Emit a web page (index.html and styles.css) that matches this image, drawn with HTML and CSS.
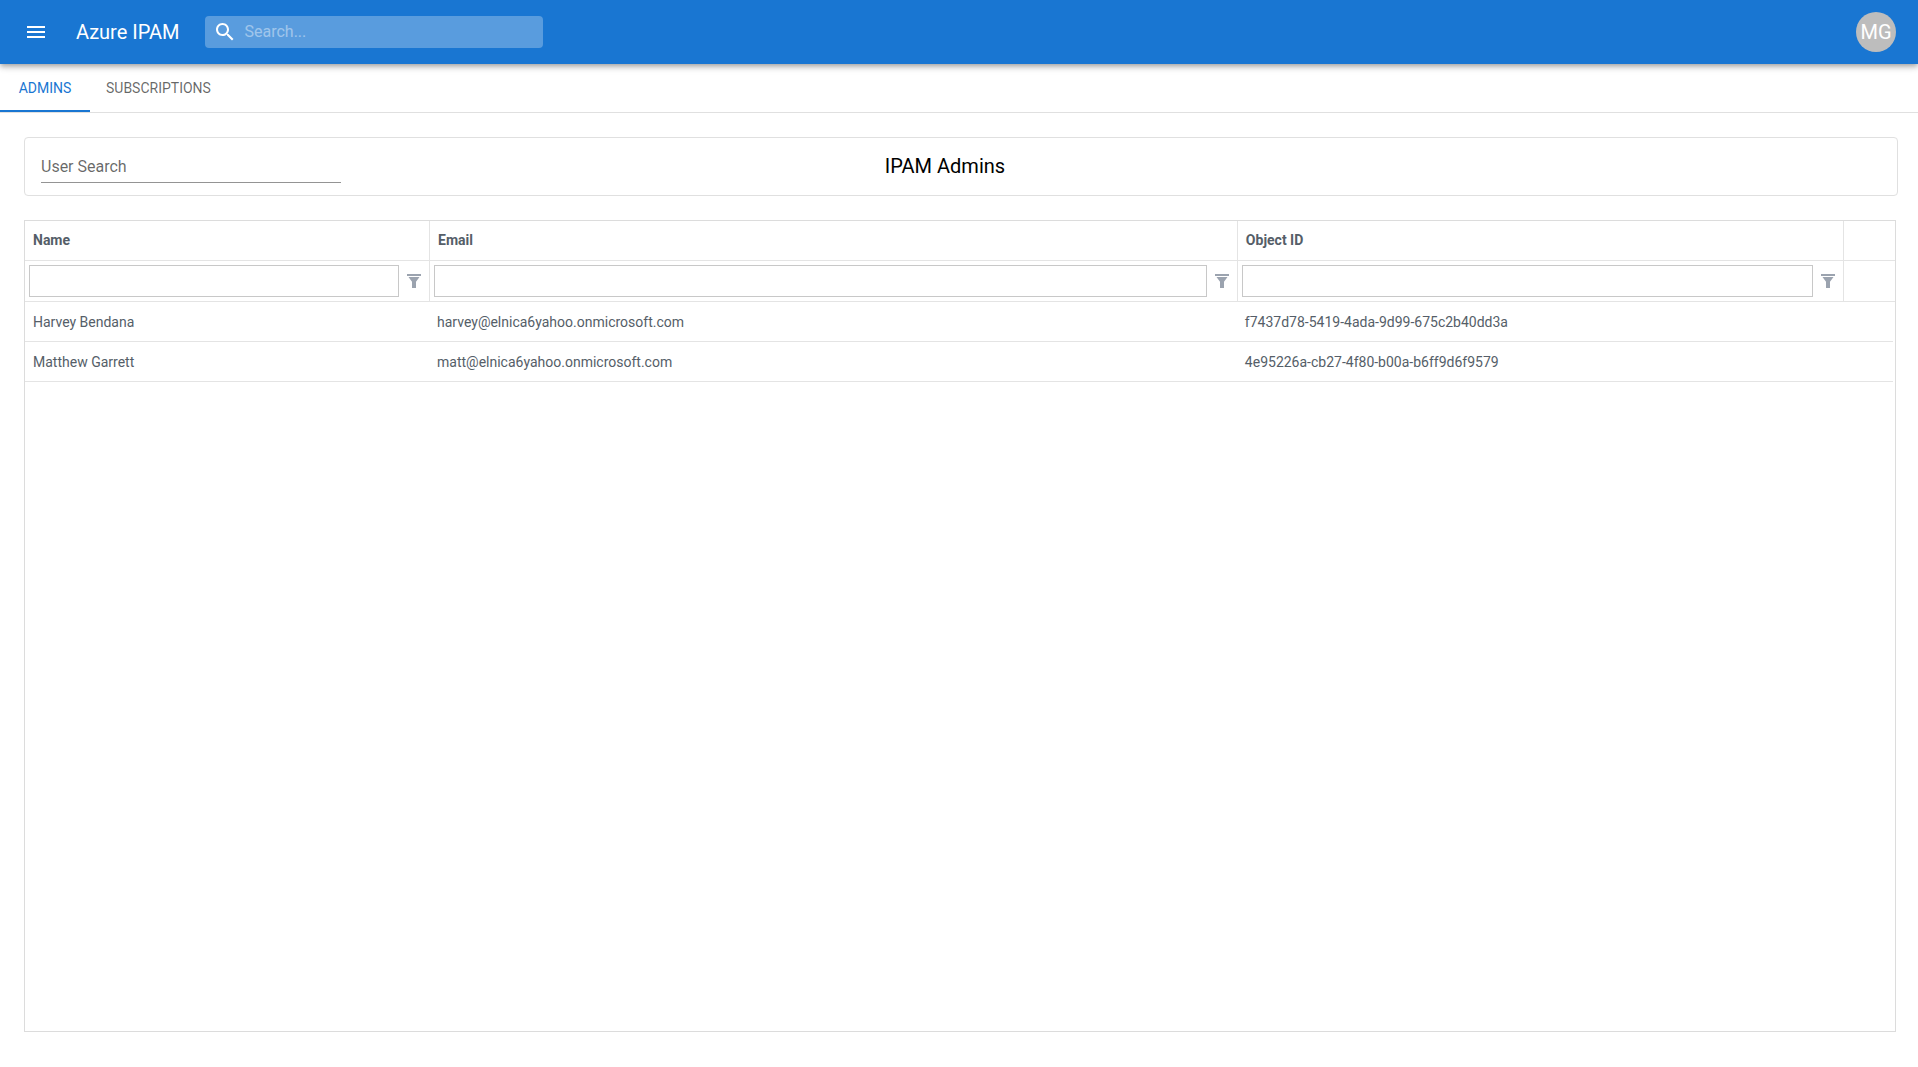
FILE: index.html
```html
<!DOCTYPE html>
<html lang="en">
<head>
  <meta charset="utf-8">
  <meta name="viewport" content="width=device-width, initial-scale=1">
  <title>Azure IPAM</title>
  <link rel="stylesheet" href="styles.css">
</head>
<body>
  <header class="app-bar">
    <button class="icon-button" type="button" aria-label="Open menu">
      <svg class="icon" viewBox="0 0 24 24"><path d="M3 18h18v-2H3v2zm0-5h18v-2H3v2zm0-7v2h18V6H3z"/></svg>
    </button>
    <div class="brand">Azure IPAM</div>
    <label class="search">
      <svg class="icon" viewBox="0 0 24 24"><path d="M15.5 14h-.79l-.28-.27C15.41 12.59 16 11.11 16 9.5 16 5.91 13.09 3 9.5 3S3 5.91 3 9.5 5.91 16 9.5 16c1.61 0 3.09-.59 4.23-1.57l.27.28v.79l5 4.99L20.49 19l-4.99-5zm-6 0C7.01 14 5 11.99 5 9.5S7.01 5 9.5 5 14 7.01 14 9.5 11.99 14 9.5 14z"/></svg>
      <input class="search-input" type="text" placeholder="Search..." aria-label="Search">
    </label>
    <button class="avatar" type="button">MG</button>
  </header>

  <nav class="tabs" role="tablist">
    <button class="tab tab-active" type="button" role="tab" aria-selected="true">ADMINS</button>
    <button class="tab" type="button" role="tab" aria-selected="false">SUBSCRIPTIONS</button>
  </nav>

  <main class="content">
    <section class="toolbar">
      <input class="user-search" type="text" placeholder="User Search" aria-label="User Search">
      <h1 class="toolbar-title">IPAM Admins</h1>
    </section>

    <section class="grid">
      <table class="grid-table">
        <colgroup>
          <col class="col-name">
          <col class="col-email">
          <col class="col-id">
          <col>
        </colgroup>
        <thead>
          <tr class="head-row">
            <th scope="col">Name</th>
            <th scope="col">Email</th>
            <th scope="col">Object ID</th>
            <th></th>
          </tr>
          <tr class="filter-row">
            <td>
              <div class="filter">
                <input class="filter-input" type="text" aria-label="Filter by name">
                <button class="filter-button" type="button" aria-label="Name filter options">
                  <svg class="filter-icon" viewBox="0 0 14 14"><path d="M0 0h14v2H0zM1.5 3h11L9 7.8V14H5V7.8z"/></svg>
                </button>
              </div>
            </td>
            <td>
              <div class="filter">
                <input class="filter-input" type="text" aria-label="Filter by email">
                <button class="filter-button" type="button" aria-label="Email filter options">
                  <svg class="filter-icon" viewBox="0 0 14 14"><path d="M0 0h14v2H0zM1.5 3h11L9 7.8V14H5V7.8z"/></svg>
                </button>
              </div>
            </td>
            <td>
              <div class="filter">
                <input class="filter-input" type="text" aria-label="Filter by object ID">
                <button class="filter-button" type="button" aria-label="Object ID filter options">
                  <svg class="filter-icon" viewBox="0 0 14 14"><path d="M0 0h14v2H0zM1.5 3h11L9 7.8V14H5V7.8z"/></svg>
                </button>
              </div>
            </td>
            <td></td>
          </tr>
        </thead>
        <tbody>
          <tr>
            <td>Harvey Bendana</td>
            <td>harvey@elnica6yahoo.onmicrosoft.com</td>
            <td>f7437d78-5419-4ada-9d99-675c2b40dd3a</td>
            <td></td>
          </tr>
          <tr>
            <td>Matthew Garrett</td>
            <td>matt@elnica6yahoo.onmicrosoft.com</td>
            <td>4e95226a-cb27-4f80-b00a-b6ff9d6f9579</td>
            <td></td>
          </tr>
        </tbody>
      </table>
    </section>
  </main>
</body>
</html>
```
FILE: styles.css
```css
:root {
  --primary: #1976d2;
  --line: #e0e0e0;
  --cell-line: #e4e4e4;
  --grid-text: #555e68;
}

* {
  box-sizing: border-box;
}

body {
  margin: 0;
  min-height: 100vh;
  display: flex;
  flex-direction: column;
  background: #fff;
  color: #000;
  font-family: Roboto, "Liberation Sans", sans-serif;
}

button,
input {
  font: inherit;
  margin: 0;
  padding: 0;
  border: 0;
  background: none;
  outline: none;
}

button {
  cursor: pointer;
}

/* App bar */
.app-bar {
  position: relative;
  height: 64px;
  padding: 0 22px 0 24px;
  display: flex;
  align-items: center;
  background: var(--primary);
  color: #fff;
  box-shadow: 0 2px 4px -1px rgba(0, 0, 0, 0.2), 0 4px 5px rgba(0, 0, 0, 0.14), 0 1px 10px rgba(0, 0, 0, 0.12);
}

.icon {
  display: block;
  flex: none;
  width: 24px;
  height: 24px;
  fill: currentColor;
}

.icon-button {
  color: inherit;
}

.brand {
  margin: 0 25px 0 28px;
  font-size: 20px;
  line-height: 32px;
}

.search {
  width: 338px;
  height: 32px;
  padding: 0 8px;
  display: flex;
  align-items: center;
  gap: 8px;
  border-radius: 4px;
  background: rgba(255, 255, 255, 0.28);
}

.search-input {
  flex: 1;
  min-width: 0;
  padding-bottom: 2px;
  color: #fff;
  font-size: 16px;
}

.search-input::placeholder {
  color: #fff;
  opacity: 0.42;
}

.avatar {
  width: 40px;
  height: 40px;
  margin-left: auto;
  border-radius: 50%;
  background: #bdbdbd;
  color: #fff;
  font-size: 20px;
}

/* Tabs */
.tabs {
  display: flex;
  border-bottom: 1px solid var(--line);
}

.tab {
  min-width: 90px;
  height: 48px;
  padding: 2px 16px 0;
  border-bottom: 2px solid transparent;
  color: rgba(0, 0, 0, 0.6);
  font-size: 14px;
}

.tab-active {
  border-bottom-color: var(--primary);
  color: var(--primary);
}

/* Content */
.content {
  flex: 1;
  display: flex;
  flex-direction: column;
  gap: 24px;
  padding: 24px 20px 35px 24px;
}

.toolbar {
  display: grid;
  grid-template-columns: 1fr auto 1fr;
  align-items: start;
  padding: 13px 48px 12px 16px;
  border: 1px solid var(--line);
  border-radius: 4px;
}

.user-search {
  width: 300px;
  height: 32px;
  border-bottom: 1px solid #949494;
  font-size: 16px;
}

.user-search::placeholder {
  color: rgba(0, 0, 0, 0.6);
  opacity: 1;
}

.toolbar-title {
  margin: 0;
  font-size: 20px;
  font-weight: 400;
  line-height: 30px;
}

/* Data grid */
.grid {
  flex: 1;
  margin-right: 2px;
  border: 1px solid #dcdcdc;
}

.grid-table {
  width: 100%;
  table-layout: fixed;
  border-collapse: separate;
  border-spacing: 0;
  color: var(--grid-text);
  font-size: 14px;
}

.col-name {
  width: 21.66%;
}

.col-email {
  width: 43.2%;
}

.col-id {
  width: 32.4%;
}

.grid-table th,
.grid-table td {
  height: 40px;
  padding: 0 8px;
  border-bottom: 1px solid var(--cell-line);
  text-align: left;
}

.grid-table thead th:not(:last-child),
.grid-table thead td:not(:last-child) {
  border-right: 1px solid var(--cell-line);
}

.grid-table .head-row th {
  padding-bottom: 2px;
  font-weight: 700;
}

.grid-table .filter-row td {
  height: 41px;
  padding: 4px 8px 4px 4px;
}

.grid-table tbody td + td {
  padding-left: 7px;
}

/* Row lines stop just short of the frame */
.grid-table tbody td:last-child {
  border-bottom: 0;
  background: linear-gradient(var(--cell-line), var(--cell-line)) left bottom / calc(100% - 2px) 1px no-repeat;
}

.filter {
  display: flex;
  align-items: center;
  gap: 8px;
}

.filter-input {
  flex: 1;
  min-width: 0;
  height: 32px;
  padding: 0 8px;
  border: 1px solid #c8c8c8;
  color: inherit;
}

.filter-button {
  flex: none;
}

.filter-icon {
  display: block;
  width: 14px;
  height: 14px;
  fill: #9ba3af;
}
```
